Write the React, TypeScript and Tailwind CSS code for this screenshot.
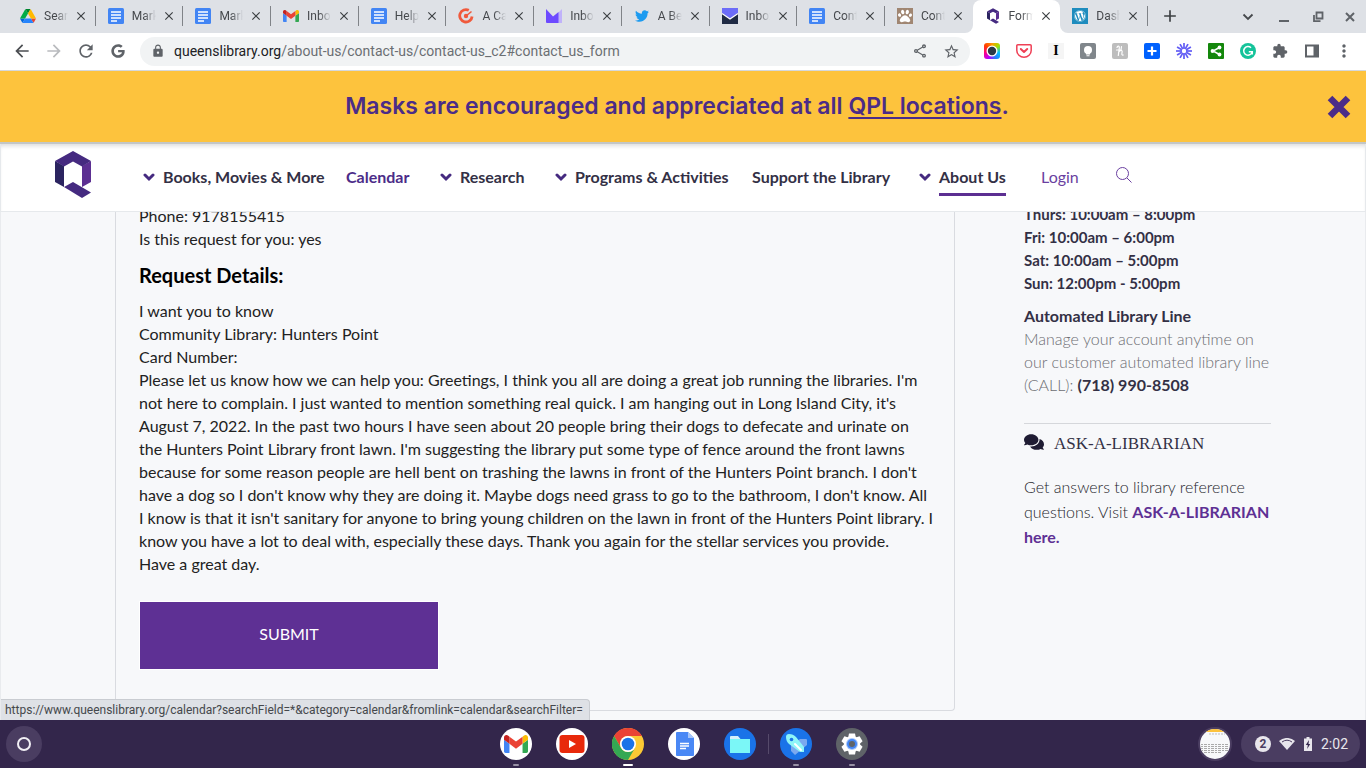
import React from "react";
import {
  MdArrowBack,
  MdArrowForward,
  MdRefresh,
  MdLock,
  MdOutlineShare,
  MdStarBorder,
  MdExtension,
  MdMoreVert,
  MdClose,
  MdAdd,
} from "react-icons/md";
import { FaGoogle, FaTwitter, FaWordpress, FaComments, FaPaw } from "react-icons/fa";

const DriveIcon = () => (
  <svg viewBox="0 0 87.3 78" className="h-[14px] w-4">
    <path d="M6.6 66.85l3.85 6.65c.8 1.4 1.95 2.5 3.3 3.3l13.75-23.8H0c0 1.55.4 3.1 1.2 4.5z" fill="#0066da" />
    <path d="M43.65 25L29.9 1.2c-1.35.8-2.5 1.9-3.3 3.3L1.2 48.5A9 9 0 0 0 0 53h27.5z" fill="#00ac47" />
    <path d="M73.55 76.8c1.35-.8 2.5-1.9 3.3-3.3l1.6-2.75L86.1 57.5c.8-1.4 1.2-2.95 1.2-4.5H59.8l5.85 11.5z" fill="#ea4335" />
    <path d="M43.65 25L57.4 1.2C56.05.4 54.5 0 52.9 0H34.4c-1.6 0-3.15.45-4.5 1.2z" fill="#00832d" />
    <path d="M59.8 53H27.5L13.75 76.8c1.35.8 2.9 1.2 4.5 1.2h50.8c1.6 0 3.15-.45 4.5-1.2z" fill="#2684fc" />
    <path d="M73.4 26.5L60.7 4.5c-.8-1.4-1.95-2.5-3.3-3.3L43.65 25 59.8 53h27.45c0-1.55-.4-3.1-1.2-4.5z" fill="#ffba00" />
  </svg>
);

const DocsIcon = () => (
  <svg viewBox="0 0 16 16" className="size-4">
    <rect width="16" height="16" rx="1.5" fill="#4285f4" />
    <path d="M3 4h10M3 7h10M3 10h10M3 13h6" stroke="#fff" strokeWidth="1.3" />
  </svg>
);

const GmailIcon = ({ className }: { className: string }) => (
  <svg viewBox="52 42 88 66" className={className}>
    <path fill="#4285f4" d="M58 108h14V74L52 59v43c0 3.32 2.69 6 6 6" />
    <path fill="#34a853" d="M120 108h14c3.32 0 6-2.69 6-6V59l-20 15" />
    <path fill="#fbbc04" d="M120 48v26l20-15v-8c0-7.42-8.47-11.65-14.4-7.2" />
    <path fill="#ea4335" d="M72 74V48l24 18 24-18v26L96 92" />
    <path fill="#c5221f" d="M52 51v8l20 15V48l-5.6-4.2c-5.94-4.45-14.4-.22-14.4 7.2" />
  </svg>
);

const TargetIcon = () => (
  <svg viewBox="0 0 16 16" className="size-4" fill="none">
    <path d="M10.800 2.300A6.200 6.200 0 1 0 14.100 8.500" stroke="#f05a3c" strokeWidth="2.800" />
    <path d="M8 8l5.500-4.500" stroke="#f05a3c" strokeWidth="1.6" />
    <circle cx="8" cy="8" r="2.2" fill="#f05a3c" />
  </svg>
);

const VioletMailIcon = () => (
  <svg viewBox="0 0 16 16" className="size-4">
    <path d="M16 1v14H2l7-7z" fill="#c0b2fa" />
    <path d="M0 1l7 7.5L12.5 4v11H1a1 1 0 0 1-1-1z" fill="#6d4aff" />
  </svg>
);

const NavyMailIcon = () => (
  <svg viewBox="0 0 16 16" className="size-4">
    <rect width="16" height="16" fill="#1f2a44" />
    <path d="M0 0h16v5L8 11 0 5z" fill="#6c6cf8" />
    <path d="M0 5.500l8 5.500 8-5.500" stroke="#fff" strokeWidth="1.300" fill="none" />
  </svg>
);

const PawIcon = () => (
  <span className="flex size-4 items-center justify-center bg-[#a08672] text-white">
    <FaPaw className="size-[14px]" />
  </span>
);

const QLogo = ({ className }: { className: string }) => (
  <svg viewBox="0 0 36 47" className={className}>
    <path d="M0 10l9 5v21l-9-5z" fill="#2b2460" />
    <path d="M27 15l9-5v21l-9 5z" fill="#5c2f92" />
    <path d="M0 10L18 0l18 10-9 5.500L18 10.500 9 15.500z" fill="#452a80" />
    <path d="M9 36l9-5 18 10.500-9 5.500z" fill="#452a80" />
  </svg>
);

type Tab = { title: string; icon: React.ReactNode; active?: boolean };

const tabs: Tab[] = [
  { title: "Search", icon: <DriveIcon /> },
  { title: "Mark", icon: <DocsIcon /> },
  { title: "Mark", icon: <DocsIcon /> },
  { title: "Inbox", icon: <GmailIcon className="h-3 w-4" /> },
  { title: "Help", icon: <DocsIcon /> },
  { title: "A Ca", icon: <TargetIcon /> },
  { title: "Inbox", icon: <VioletMailIcon /> },
  { title: "A Be", icon: <FaTwitter className="size-[14px] text-[#1d9bf0]" /> },
  { title: "Inbox", icon: <NavyMailIcon /> },
  { title: "Cont", icon: <DocsIcon /> },
  { title: "Cont", icon: <PawIcon /> },
  { title: "Form", icon: <QLogo className="h-4 w-3" />, active: true },
  {
    title: "Dash",
    icon: (
      <span className="flex size-4 items-center justify-center bg-[#1e8cbe] text-white">
        <FaWordpress className="size-3" />
      </span>
    ),
  },
];

function TabItem({ tab, divider }: { tab: Tab; divider: boolean }) {
  return (
    <div
      className={
        tab.active
          ? "relative flex h-full min-w-0 flex-1 items-center rounded-t-lg bg-white pb-px pl-3"
          : "relative flex h-full min-w-0 flex-1 items-center pb-px pl-3"
      }
    >
      {tab.active && (
        <>
          <svg viewBox="0 0 8 8" className="absolute bottom-0 -left-2 size-2"><path d="M8 0v8H0a8 8 0 0 0 8-8" fill="#fff" /></svg>
          <svg viewBox="0 0 8 8" className="absolute -right-2 bottom-0 size-2"><path d="M0 0v8h8a8 8 0 0 1-8-8" fill="#fff" /></svg>
        </>
      )}
      <span className="flex w-4 shrink-0 justify-center">{tab.icon}</span>
      <span className="ml-2 w-6 shrink-0 overflow-hidden text-xs whitespace-nowrap text-[#45484c] [mask-image:linear-gradient(to_right,#000_50%,transparent)]">
        {tab.title}
      </span>
      <button aria-label={`Close ${tab.title}`} className="ml-[6px] shrink-0 text-[#3c4043]">
        <MdClose className="size-[14px]" />
      </button>
      {divider && <span className="absolute top-[6px] right-0 h-5 w-px bg-[#808388]" />}
    </div>
  );
}

const extensions: { name: string; icon: React.ReactNode }[] = [
  {
    name: "Camera",
    icon: (
      <span className="flex size-4 items-center justify-center rounded-[3px] bg-[conic-gradient(#ff9d00,#a4e000,#00c2ff,#2a7bff,#b400ff,#ff0080,#ff3d00,#ff9d00)]">
        <svg viewBox="0 0 14 14" className="size-[14px]">
          <circle cx="7" cy="7" r="5.500" fill="#fff" />
          <circle cx="7" cy="7" r="4.200" fill="#2b3a46" />
        </svg>
      </span>
    ),
  },
  {
    name: "Pocket",
    icon: (
      <svg viewBox="0 0 16 16" className="size-4" fill="none" stroke="#ef4056" strokeLinecap="round" strokeLinejoin="round">
        <path d="M1.800 1.800h12.400a1 1 0 0 1 1 1V7.500a7.200 6.800 0 0 1-14.400 0V2.800a1 1 0 0 1 1-1z" strokeWidth="1.500" />
        <path d="M4.800 6L8 9l3.200-3" strokeWidth="2" />
      </svg>
    ),
  },
  {
    name: "Instapaper",
    icon: <span className="flex size-4 items-center justify-center bg-[#f5f5f5] font-['Liberation_Serif',serif] text-sm font-bold text-black">I</span>,
  },
  {
    name: "Ideas",
    icon: (
      <svg viewBox="0 0 16 16" className="size-4">
        <rect width="16" height="16" rx="2" fill="#80868b" />
        <circle cx="8" cy="7" r="4" fill="#fff" />
        <path d="M6 10h4v1.500H6zM6.500 12.300h3v1h-3z" fill="#fff" />
      </svg>
    ),
  },
  {
    name: "Honey",
    icon: (
      <svg viewBox="0 0 16 16" className="size-4">
        <rect width="16" height="16" rx="2" fill="#bdbdbd" />
        <path d="M5 4.500c.5-2 2.500-2 2.300.3L6.300 12.500M6.500 9.500c1.500-3 4-2.700 3.600-.5-.4 2-.6 3.500 1.200 3M4.500 7h5M9.500 3.500l-.4 2.500" stroke="#fff" strokeWidth="1.200" fill="none" strokeLinecap="round" />
      </svg>
    ),
  },
  {
    name: "Add",
    icon: (
      <svg viewBox="0 0 16 16" className="size-4">
        <rect width="16" height="16" rx="2" fill="#0061fe" />
        <path d="M8 3.500v9M3.500 8h9" stroke="#fff" strokeWidth="2.200" />
      </svg>
    ),
  },
  {
    name: "Loom",
    icon: (
      <svg viewBox="-8 -8 16 16" className="size-4" stroke="#625df5" strokeWidth="1.700">
        {[0, 30, 60, 90, 120, 150, 180, 210, 240, 270, 300, 330].map((angle) => (
          <path key={angle} d="M0-3v-5" transform={`rotate(${angle})`} />
        ))}
        <circle r="2.800" fill="none" strokeWidth="1.200" />
      </svg>
    ),
  },
  {
    name: "Share page",
    icon: (
      <svg viewBox="0 0 16 16" className="size-4">
        <rect width="16" height="16" rx="1" fill="#14870c" />
        <path d="M11.500 4.500L5 8l6.500 3.500" stroke="#fff" strokeWidth="1.500" fill="none" />
        <circle cx="11.500" cy="4.500" r="1.900" fill="#fff" />
        <circle cx="4.500" cy="8" r="1.900" fill="#fff" />
        <circle cx="11.500" cy="11.500" r="1.900" fill="#fff" />
      </svg>
    ),
  },
  {
    name: "Grammarly",
    icon: (
      <svg viewBox="0 0 16 16" className="size-4">
        <circle cx="8" cy="8" r="8" fill="#15c39a" />
        <path d="M11 4.800a4.300 4.300 0 1 0 1.200 4H8.800M12.300 8.500v3" stroke="#fff" strokeWidth="1.500" fill="none" />
      </svg>
    ),
  },
  { name: "Extensions", icon: <MdExtension className="size-4 text-[#5f6368]" /> },
  {
    name: "Side panel",
    icon: (
      <svg viewBox="0 0 16 16" className="size-4">
        <path d="M2 2.500h12v11H2z" stroke="#5f6368" strokeWidth="2" fill="none" />
        <path d="M9.500 2h5v12h-5z" fill="#5f6368" />
      </svg>
    ),
  },
  { name: "Menu", icon: <MdMoreVert className="size-5 text-[#5f6368]" /> },
];

function BrowserChrome() {
  return (
    <header className="font-[Roboto,sans-serif]">
      <div className="flex h-[33px] bg-[#dee1e6] pl-2">
        <div className="flex w-[1140px] min-w-0">
          {tabs.map((tab, i) => (
            <TabItem key={i} tab={tab} divider={!tab.active && !tabs[i + 1]?.active} />
          ))}
        </div>
        <button aria-label="New tab" className="ml-3 flex items-center pb-px text-[#3c4043]">
          <MdAdd className="size-5" />
        </button>
        <div className="ml-auto flex items-center text-[#5f6368]">
          <button aria-label="Search tabs" className="flex w-9 justify-center">
            <svg viewBox="0 0 12 12" className="size-3"><path d="M1.500 3.500L6 8l4.500-4.500" stroke="#45484c" strokeWidth="1.800" fill="none" /></svg>
          </button>
          <button aria-label="Minimize" className="flex w-9 justify-center">
            <svg viewBox="0 0 12 12" className="size-3"><path d="M1 10h10" stroke="#5f6368" strokeWidth="2" /></svg>
          </button>
          <button aria-label="Restore" className="flex w-8 justify-center">
            <svg viewBox="0 0 12 12" className="size-3" fill="none" stroke="#5f6368" strokeWidth="1.800"><path d="M4.500 1.500h6v6h-6zM2 4v6.200h6.500" /></svg>
          </button>
          <button aria-label="Close window" className="flex w-8 justify-center">
            <svg viewBox="0 0 12 12" className="size-3"><path d="M2 2l8 8M10 2l-8 8" stroke="#5f6368" strokeWidth="2" /></svg>
          </button>
        </div>
      </div>
      <div className="flex h-[38px] items-center border-b border-[#d5d8dc] bg-white pr-[6px] pb-px pl-3">
        <div className="flex w-32 shrink-0 items-center text-[#5f6368]">
          <button aria-label="Back" className="flex w-8"><MdArrowBack className="size-5 text-[#4b4e52]" /></button>
          <button aria-label="Forward" className="flex w-8"><MdArrowForward className="size-5 text-[#b9bbbe]" /></button>
          <button aria-label="Reload" className="flex w-8"><MdRefresh className="size-5" /></button>
          <button aria-label="Home" className="flex w-8 pl-[3px]"><FaGoogle className="size-[14px]" /></button>
        </div>
        <div className="flex h-[29px] flex-1 items-center rounded-full bg-[#f1f3f4] pr-[10px] pl-[11px] text-[#5f6368]">
          <MdLock className="size-[14px] shrink-0" />
          <div className="ml-[9px] flex-1 text-sm whitespace-nowrap text-[#6b6f73]">
            <span className="text-[#202124]">queenslibrary.org</span>/about-us/contact-us/contact-us_c2#contact_us_form
          </div>
          <button aria-label="Share"><MdOutlineShare className="size-4" /></button>
          <button aria-label="Bookmark" className="ml-[15px]"><MdStarBorder className="size-[17px]" /></button>
        </div>
        <div className="ml-[6px] flex">
          {extensions.map((e) => (
            <button key={e.name} aria-label={e.name} className="flex h-5 w-8 items-center justify-center">{e.icon}</button>
          ))}
        </div>
      </div>
    </header>
  );
}

const NavChevron = () => (
  <svg viewBox="0 0 12 9" className="mr-2 h-[9px] w-3 shrink-0"><path d="M2 2l4 4 4-4" stroke="#452a80" strokeWidth="3" fill="none" strokeLinecap="round" /></svg>
);

function SiteHeader() {
  return (
    <div className="flex h-[68px] items-center border-x border-b border-[#e6e9ec] bg-white pl-[54px] shadow-[inset_0_4px_4px_-2px_#dcdcdc]">
      <a href="#home" aria-label="Queens Public Library"><QLogo className="mb-[6px] h-[47px] w-9" /></a>
      <nav className="ml-[52px] grid grid-cols-[203px_94px_115px_197px_167px_122px_75px_16px] items-center pb-px text-base font-bold text-[#333045]">
        <a href="#books" className="flex items-center whitespace-nowrap"><NavChevron />Books, Movies &amp; More</a>
        <a href="#calendar" className="text-[#4b2c88]">Calendar</a>
        <a href="#research" className="flex items-center"><NavChevron />Research</a>
        <a href="#programs" className="flex items-center whitespace-nowrap"><NavChevron />Programs &amp; Activities</a>
        <a href="#support" className="whitespace-nowrap">Support the Library</a>
        <a href="#about" className="flex items-center whitespace-nowrap"><NavChevron /><span className="border-b-[3px] border-[#5c2f92] pt-[6px] pb-1">About Us</span></a>
        <a href="#login" className="font-normal text-[#6a3fa0]">Login</a>
        <button aria-label="Search" className="pb-1">
          <svg viewBox="0 0 16 16" className="size-4" fill="none" stroke="#6a3fa0"><circle cx="6.500" cy="6.500" r="6" /><path d="M11 11l4.500 4.500" /></svg>
        </button>
      </nav>
    </div>
  );
}

function RequestCard() {
  return (
    <section className="min-w-0 flex-1 rounded-b border border-t-0 border-[#d9dbe0] px-[23px] pb-10 text-base leading-[23px] text-[#222]">
      <p className="-mt-2">Phone: 9178155415<br />Is this request for you: yes</p>
      <h2 className="mt-[13px] text-xl leading-6 font-bold text-black">Request Details:</h2>
      <p className="mt-3 whitespace-nowrap">
        I want you to know<br />
        Community Library: Hunters Point<br />
        Card Number:<br />
        Please let us know how we can help you: Greetings, I think you all are doing a great job running the libraries. I'm<br />
        not here to complain. I just wanted to mention something real quick. I am hanging out in Long Island City, it's<br />
        August 7, 2022. In the past two hours I have seen about 20 people bring their dogs to defecate and urinate on<br />
        the Hunters Point Library front lawn. I'm suggesting the library put some type of fence around the front lawns<br />
        because for some reason people are hell bent on trashing the lawns in front of the Hunters Point branch. I don't<br />
        have a dog so I don't know why they are doing it. Maybe dogs need grass to go to the bathroom, I don't know. All<br />
        I know is that it isn't sanitary for anyone to bring young children on the lawn in front of the Hunters Point library. I<br />
        know you have a lot to deal with, especially these days. Thank you again for the stellar services you provide.<br />
        Have a great day.
      </p>
      <button className="mt-[26px] h-[69px] w-[300px] border border-white bg-[#5e3094] pb-1 text-white">SUBMIT</button>
    </section>
  );
}

function Sidebar() {
  return (
    <aside className="w-[247px] shrink-0 text-base leading-[23px] whitespace-nowrap text-[#333045]">
      <p className="-mt-[9px] text-[15px] font-bold">
        Thurs: 10:00am – 8:00pm<br />Fri: 10:00am – 6:00pm<br />Sat: 10:00am – 5:00pm<br />Sun: 12:00pm - 5:00pm
      </p>
      <h3 className="mt-[9px] font-bold">Automated Library Line</h3>
      <p className="font-light text-[#6c6d72]">
        Manage your account anytime on<br />our customer automated library line<br />(CALL): <b className="font-bold text-[#333045]">(718) 990-8508</b>
      </p>
      <h3 className="mt-[27px] flex items-center gap-[10px] border-t border-[#d5d7db] pt-2 font-['Liberation_Serif',serif] text-[17px] leading-6">
        <FaComments className="mb-1 size-5 text-[#1f1c33]" />ASK-A-LIBRARIAN
      </h3>
      <p className="mt-[18px] leading-[25px] font-light text-[#26262c]">
        Get answers to library reference<br />questions. Visit <a href="#ask" className="font-bold text-[#5e3094]">ASK-A-LIBRARIAN<br />here.</a>
      </p>
    </aside>
  );
}

const shelfApps: { name: string; mark: string; icon: React.ReactNode }[] = [
  {
    name: "Gmail",
    mark: "h-[2px] w-[6px] bg-[#9891a5]",
    icon: <span className="flex size-8 items-center justify-center rounded-full bg-white"><GmailIcon className="h-[18px] w-6" /></span>,
  },
  {
    name: "YouTube",
    mark: "h-[2px] w-[6px]",
    icon: (
      <svg viewBox="0 0 32 32" className="size-8"><circle cx="16" cy="16" r="16" fill="#fff" /><rect x="3.500" y="7" width="25" height="18" rx="3" fill="#e8290b" /><path d="M13 12l7 4-7 4z" fill="#fff" /></svg>
    ),
  },
  {
    name: "Chrome",
    mark: "h-[2px] w-[10px] bg-white",
    icon: (
      <svg viewBox="0 0 32 32" className="size-8">
        <circle cx="16" cy="16" r="16" fill="#fbc934" />
        <path d="M2.140 8A16 16 0 0 1 29.860 8H16a8 8 0 0 0-6.930 12z" fill="#ea4335" />
        <path d="M2.140 8A16 16 0 0 0 16 32l6.930-12A8 8 0 0 1 9.070 20z" fill="#34a853" />
        <circle cx="16" cy="16" r="8" fill="#fff" /><circle cx="16" cy="16" r="6.300" fill="#1a73e8" />
      </svg>
    ),
  },
  {
    name: "Docs",
    mark: "h-[2px] w-[6px]",
    icon: (
      <svg viewBox="0 0 32 32" className="size-8"><circle cx="16" cy="16" r="16" fill="#fff" /><path d="M9 4h11l6 6v17a1 1 0 0 1-1 1H9a1 1 0 0 1-1-1V5a1 1 0 0 1 1-1z" fill="#4a88f5" /><path d="M20 4l6 6h-6z" fill="#a6c5fa" /><path d="M12 15.500h9M12 18h9M12 20.500h6" stroke="#fff" strokeWidth="1.300" /></svg>
    ),
  },
  {
    name: "Files",
    mark: "h-[2px] w-[6px]",
    icon: (
      <svg viewBox="0 0 32 32" className="size-8"><circle cx="16" cy="16" r="16" fill="#1a73e8" /><path d="M7 8h7l2.500 3H25a1 1 0 0 1 1 1v12a1 1 0 0 1-1 1H7a1 1 0 0 1-1-1V9a1 1 0 0 1 1-1z" fill="#d3f0fb" /><path d="M6 11h20v13a1 1 0 0 1-1 1H7a1 1 0 0 1-1-1z" fill="#7bf7f7" /></svg>
    ),
  },
  {
    name: "Explore",
    mark: "h-[2px] w-[6px] bg-[#9891a5]",
    icon: (
      <svg viewBox="0 0 32 32" className="size-8">
        <circle cx="16" cy="16" r="16" fill="#1a73e8" />
        <path d="M20 11h6a1 1 0 0 1 1 1v5L15 27l-4-4v-6z" fill="#7ba9ef" />
        <path d="M6 9c0-2 1-3 3-3 3 0 5 1 7 3l8 10v5h-4L9 16c-2-2-3-4-3-7z" fill="#8ff5f8" />
        <path d="M15 16l6 6" stroke="#fff" strokeWidth="2" strokeLinecap="round" /><circle cx="11.500" cy="11.500" r="1.800" fill="#1a73e8" />
      </svg>
    ),
  },
  {
    name: "Settings",
    mark: "h-[2px] w-[6px] bg-[#9891a5]",
    icon: (
      <svg viewBox="-16 -16 32 32" className="size-8">
        <circle r="16" fill="#5f6368" />
        {[0, 60, 120, 180, 240, 300].map((angle) => (
          <path key={angle} d="M-3-10.500h6l1 5h-8z" fill="#fff" transform={`rotate(${angle})`} />
        ))}
        <circle r="8" fill="#fff" /><circle r="6" fill="#a9c8fa" /><circle r="5" fill="#4285f4" /><circle r="3" fill="#5f6368" />
      </svg>
    ),
  },
];

function Shelf() {
  return (
    <footer className="grid h-12 grid-cols-[1fr_auto_1fr] items-center bg-[#33264b] font-[Roboto,sans-serif]">
      <button aria-label="Launcher" className="ml-[6px] flex size-9 items-center justify-center rounded-full bg-[#4a3d61]">
        <span className="size-[14px] rounded-full border-2 border-[#f1eff4]" />
      </button>
      <div className="flex h-full pl-px">
        {shelfApps.map((app) => (
          <React.Fragment key={app.name}>
            {app.name === "Explore" && <span className="-mr-px h-5 w-px self-center bg-[#564a6b]" />}
            <button aria-label={app.name} className="flex w-14 flex-col items-center gap-1 pt-2">
              {app.icon}
              <span className={app.mark + " rounded-full"} />
            </button>
          </React.Fragment>
        ))}
      </div>
      <div className="flex items-center justify-end gap-[9px] pr-[6px]">
        <button aria-label="Recent capture" className="size-[34px] overflow-hidden rounded-full border-2 border-[#4a3d61] bg-[#f7f8fa]">
          <svg viewBox="0 0 30 30" fill="none">
            <path d="M0 0h30v3H0z" fill="#fcc23d" />
            <path d="M9 5h16" stroke="#bbb" strokeDasharray="2 1" />
            <path d="M1 15.500h28M1 17.500h28M1 19.500h28M1 21.500h28M1 23.500h20" stroke="#aaa" strokeDasharray="2 1 3 1" />
          </svg>
        </button>
        <button className="flex h-9 items-center rounded-full bg-[#4a3d61] pr-3 pl-[14px] text-sm text-[#e8e6ec]">
          <span className="flex size-4 items-center justify-center rounded-full bg-[#e8e6ec] text-xs font-bold text-[#4a3d61]">2</span>
          <svg viewBox="0 0 16 12" className="ml-2 h-3 w-4"><path d="M0 3a12 12 0 0 1 16 0L8 12z" fill="#e8e6ec" /><path d="M3 4a8.500 8.500 0 0 1 10 0" stroke="#4a3d61" fill="none" /></svg>
          <svg viewBox="0 0 8 14" className="mx-[9px] h-[14px] w-2"><path d="M2.500 0h3v1.500H8V14H0V1.500h2.500z" fill="#e8e6ec" /><path d="M5 3L1.800 8h2L3.200 12l3-5H4.500z" fill="#33264b" /></svg>
          2:02
        </button>
      </div>
    </footer>
  );
}

export default function App() {
  return (
    <div className="flex h-screen min-h-0 flex-col overflow-hidden bg-[#f7f8fa] font-[Lato,sans-serif]">
      <BrowserChrome />
      <div className="relative flex h-[73px] items-center justify-center border-b-2 border-[#c3c6c6] bg-[#fdc33d] pr-3 font-[Inter,sans-serif] text-[23px] font-semibold text-[#4b2c88]">
        <p>Masks are encouraged and appreciated at all <a href="#locations" className="underline underline-offset-3">QPL locations</a>.</p>
        <button aria-label="Dismiss" className="absolute right-[15px]">
          <svg viewBox="0 0 24 24" className="size-6"><path d="M3 3l18 18M21 3L3 21" stroke="#4b2c88" strokeWidth="6.500" /></svg>
        </button>
      </div>
      <SiteHeader />
      <main className="relative min-h-0 flex-1 overflow-hidden border-x border-[#e9ebee]">
        <div className="flex gap-[69px] pr-[94px] pl-[114px]">
          <RequestCard />
          <Sidebar />
        </div>
        <div className="absolute bottom-0 left-0 rounded-tr-sm border-t border-r border-[#c9ccd1] bg-[#dee1e6] pr-[6px] pl-1 font-[Roboto,sans-serif] text-xs leading-5 text-[#45484c]">
          https://www.queenslibrary.org/calendar?searchField=*&amp;category=calendar&amp;fromlink=calendar&amp;searchFilter=
        </div>
      </main>
      <Shelf />
    </div>
  );
}
